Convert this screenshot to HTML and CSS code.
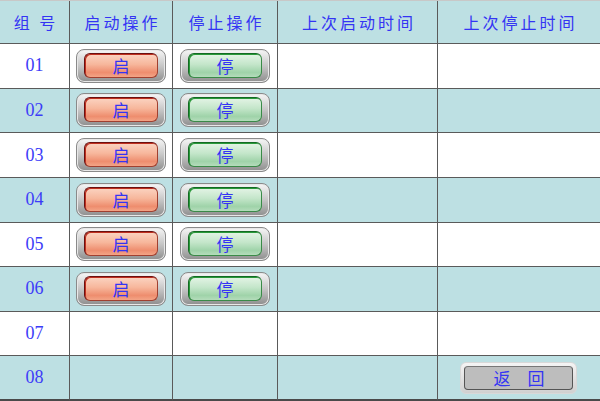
FILE: index.html
```html
<!DOCTYPE html>
<html lang="zh-CN">
<head>
  <meta charset="UTF-8" />
  <title>组操作记录</title>
  <link rel="stylesheet" href="styles.css">
</head>
<body>

<div class="grid">
  <div class="cell head">组 号</div>
  <div class="cell head">启动操作</div>
  <div class="cell head">停止操作</div>
  <div class="cell head">上次启动时间</div>
  <div class="cell head last">上次停止时间</div>

  <div class="cell num">01</div>
  <div class="cell"><span class="btn start"><span class="face">启</span></span></div>
  <div class="cell"><span class="btn stop"><span class="face">停</span></span></div>
  <div class="cell"></div>
  <div class="cell last"></div>

  <div class="cell num alt">02</div>
  <div class="cell alt"><span class="btn start"><span class="face">启</span></span></div>
  <div class="cell alt"><span class="btn stop"><span class="face">停</span></span></div>
  <div class="cell alt"></div>
  <div class="cell alt last"></div>

  <div class="cell num">03</div>
  <div class="cell"><span class="btn start"><span class="face">启</span></span></div>
  <div class="cell"><span class="btn stop"><span class="face">停</span></span></div>
  <div class="cell"></div>
  <div class="cell last"></div>

  <div class="cell num alt">04</div>
  <div class="cell alt"><span class="btn start"><span class="face">启</span></span></div>
  <div class="cell alt"><span class="btn stop"><span class="face">停</span></span></div>
  <div class="cell alt"></div>
  <div class="cell alt last"></div>

  <div class="cell num">05</div>
  <div class="cell"><span class="btn start"><span class="face">启</span></span></div>
  <div class="cell"><span class="btn stop"><span class="face">停</span></span></div>
  <div class="cell"></div>
  <div class="cell last"></div>

  <div class="cell num alt">06</div>
  <div class="cell alt"><span class="btn start"><span class="face">启</span></span></div>
  <div class="cell alt"><span class="btn stop"><span class="face">停</span></span></div>
  <div class="cell alt"></div>
  <div class="cell alt last"></div>

  <div class="cell num">07</div>
  <div class="cell"></div>
  <div class="cell"></div>
  <div class="cell"></div>
  <div class="cell last"></div>

  <div class="cell num alt bottom">08</div>
  <div class="cell alt bottom"></div>
  <div class="cell alt bottom"></div>
  <div class="cell alt bottom"></div>
  <div class="cell alt bottom last"><span class="back"><span class="back-face">返　回</span></span></div>
</div>

</body>
</html>
```

FILE: styles.css
```css
* {
  margin: 0;
  padding: 0;
  box-sizing: border-box;
}

body {
  width: 600px;
  height: 401px;
  overflow: hidden;
  background: #fff;
  font-family: "Noto Sans CJK SC", sans-serif;
  color: #3434f4;
}

.grid {
  display: grid;
  grid-template-columns: 70px 103px 105px 160px 162px;
  grid-template-rows: 43px repeat(8, 1fr);
  height: 401px;
  border-top: 1px solid #c8c8c8;
}

.cell {
  display: flex;
  align-items: center;
  justify-content: center;
  background: #fff;
  border-right: 1px solid #5a5a5a;
  border-bottom: 1px solid #5a5a5a;
}

.cell.last { border-right: none; }
.cell.alt { background: #bde0e3; }
.cell.bottom { border-bottom: 2px solid #4a4a4a; }

.head {
  background: #bde0e3;
  font-size: 16px;
  letter-spacing: 3px;
  padding-left: 3px;
  white-space: pre;
}

.num {
  font-family: "Liberation Serif", serif;
  font-size: 18px;
  color: #3c3cf8;
}

/* bevelled buttons */
.btn {
  display: flex;
  width: 90px;
  height: 34px;
  padding: 3px 7px 4px 7px;
  border-radius: 8px;
  border: 1px solid #8a8a8a;
  background: linear-gradient(#f6f6f6, #c6c6c6 50%, #8e8e8e);
  box-shadow: inset 0 0 0 1px #e8e8e8;
}

.face {
  flex: 1;
  display: flex;
  align-items: center;
  justify-content: center;
  border-radius: 6px;
  font-size: 17px;
  color: #3434f4;
}

.start .face {
  border: 1px solid #6b1010;
  border-right-color: #a04030;
  border-bottom-color: #a04030;
  background: linear-gradient(#fbd4c2, #f7b79c 45%, #ee8d6e 80%, #f3a486);
  box-shadow: inset 1px 1px 0 #c03020;
}

.stop .face {
  border: 1px solid #146a24;
  border-right-color: #3a8a48;
  border-bottom-color: #3a8a48;
  background: linear-gradient(#e4f4e6, #c4e6ca 45%, #9fd3a9 80%, #b4dcbb);
  box-shadow: inset 1px 1px 0 #2a9a3a;
}

.back {
  display: flex;
  width: 117px;
  height: 32px;
  padding: 3px;
  margin-left: -2px;
  border-radius: 6px;
  background: linear-gradient(#f4f4f4, #d0d0d0);
  border: 1px solid #d8d8d8;
}

.back-face {
  flex: 1;
  display: flex;
  align-items: center;
  justify-content: center;
  padding-left: 2px;
  border-radius: 4px;
  border: 1px solid #555;
  border-top-color: #777;
  background: #bdbdbd;
  font-size: 17px;
  color: #3434f4;
  white-space: pre;
}
```
